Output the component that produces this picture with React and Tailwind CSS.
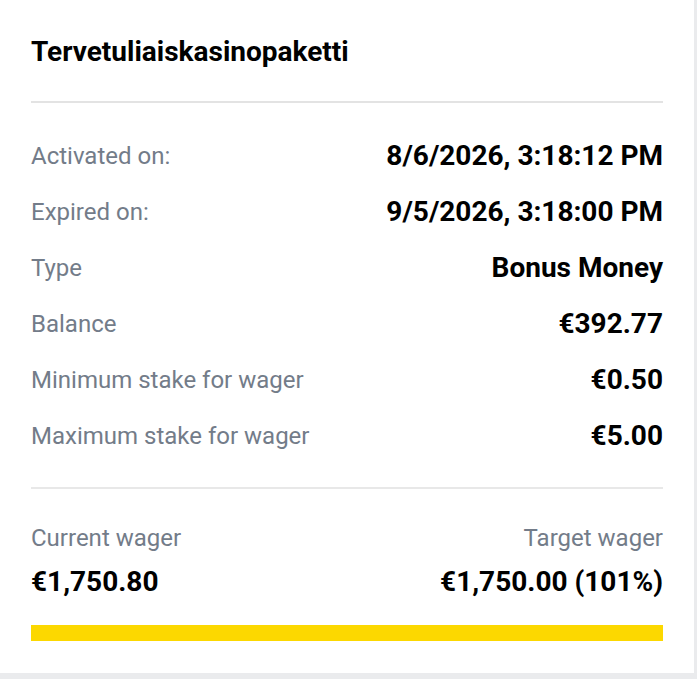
import React from 'react';

const rows = [
  { label: 'Activated on:', value: '8/6/2026, 3:18:12 PM' },
  { label: 'Expired on:', value: '9/5/2026, 3:18:00 PM' },
  { label: 'Type', value: 'Bonus Money' },
  { label: 'Balance', value: '€392.77' },
  { label: 'Minimum stake for wager', value: '€0.50' },
  { label: 'Maximum stake for wager', value: '€5.00' },
];

const BonusCard = () => {
  return (
    <div className="w-[694px] h-[673px] bg-white px-[31px] pt-[31px] pb-[31px] flex flex-col">
      <h2 className="text-[28px] leading-[42px] font-bold text-black">Tervetuliaiskasinopaketti</h2>
      <div className="mt-[28px] h-[2px] bg-[#e3e3e3]"></div>

      <div className="mt-[25px] flex flex-col">
        {rows.map((row) => (
          <div key={row.label} className="flex items-center justify-between h-[56px]">
            <span className="text-[24px] text-[#737c89]">{row.label}</span>
            <span className="text-[28px] font-bold text-black">{row.value}</span>
          </div>
        ))}
      </div>

      <div className="mt-[23px] h-[2px] bg-[#e8e8e8]"></div>

      <div className="mt-[33px] flex justify-between">
        <div className="flex flex-col">
          <span className="text-[24px] leading-[32px] text-[#737c89]">Current wager</span>
          <span className="mt-[12px] text-[28px] leading-[32px] font-bold text-black">€1,750.80</span>
        </div>
        <div className="flex flex-col items-end">
          <span className="text-[24px] leading-[32px] text-[#737c89]">Target wager</span>
          <span className="mt-[12px] text-[28px] leading-[32px] font-bold text-black">€1,750.00 (101%)</span>
        </div>
      </div>

      <div className="mt-[27px] h-[16px] bg-[#fcd800]"></div>
    </div>
  );
};

export default function App() {
  return (
    <div className="w-[697px] h-[679px] bg-[#eaebed] font-['Roboto',sans-serif]">
      <BonusCard />
    </div>
  );
}
